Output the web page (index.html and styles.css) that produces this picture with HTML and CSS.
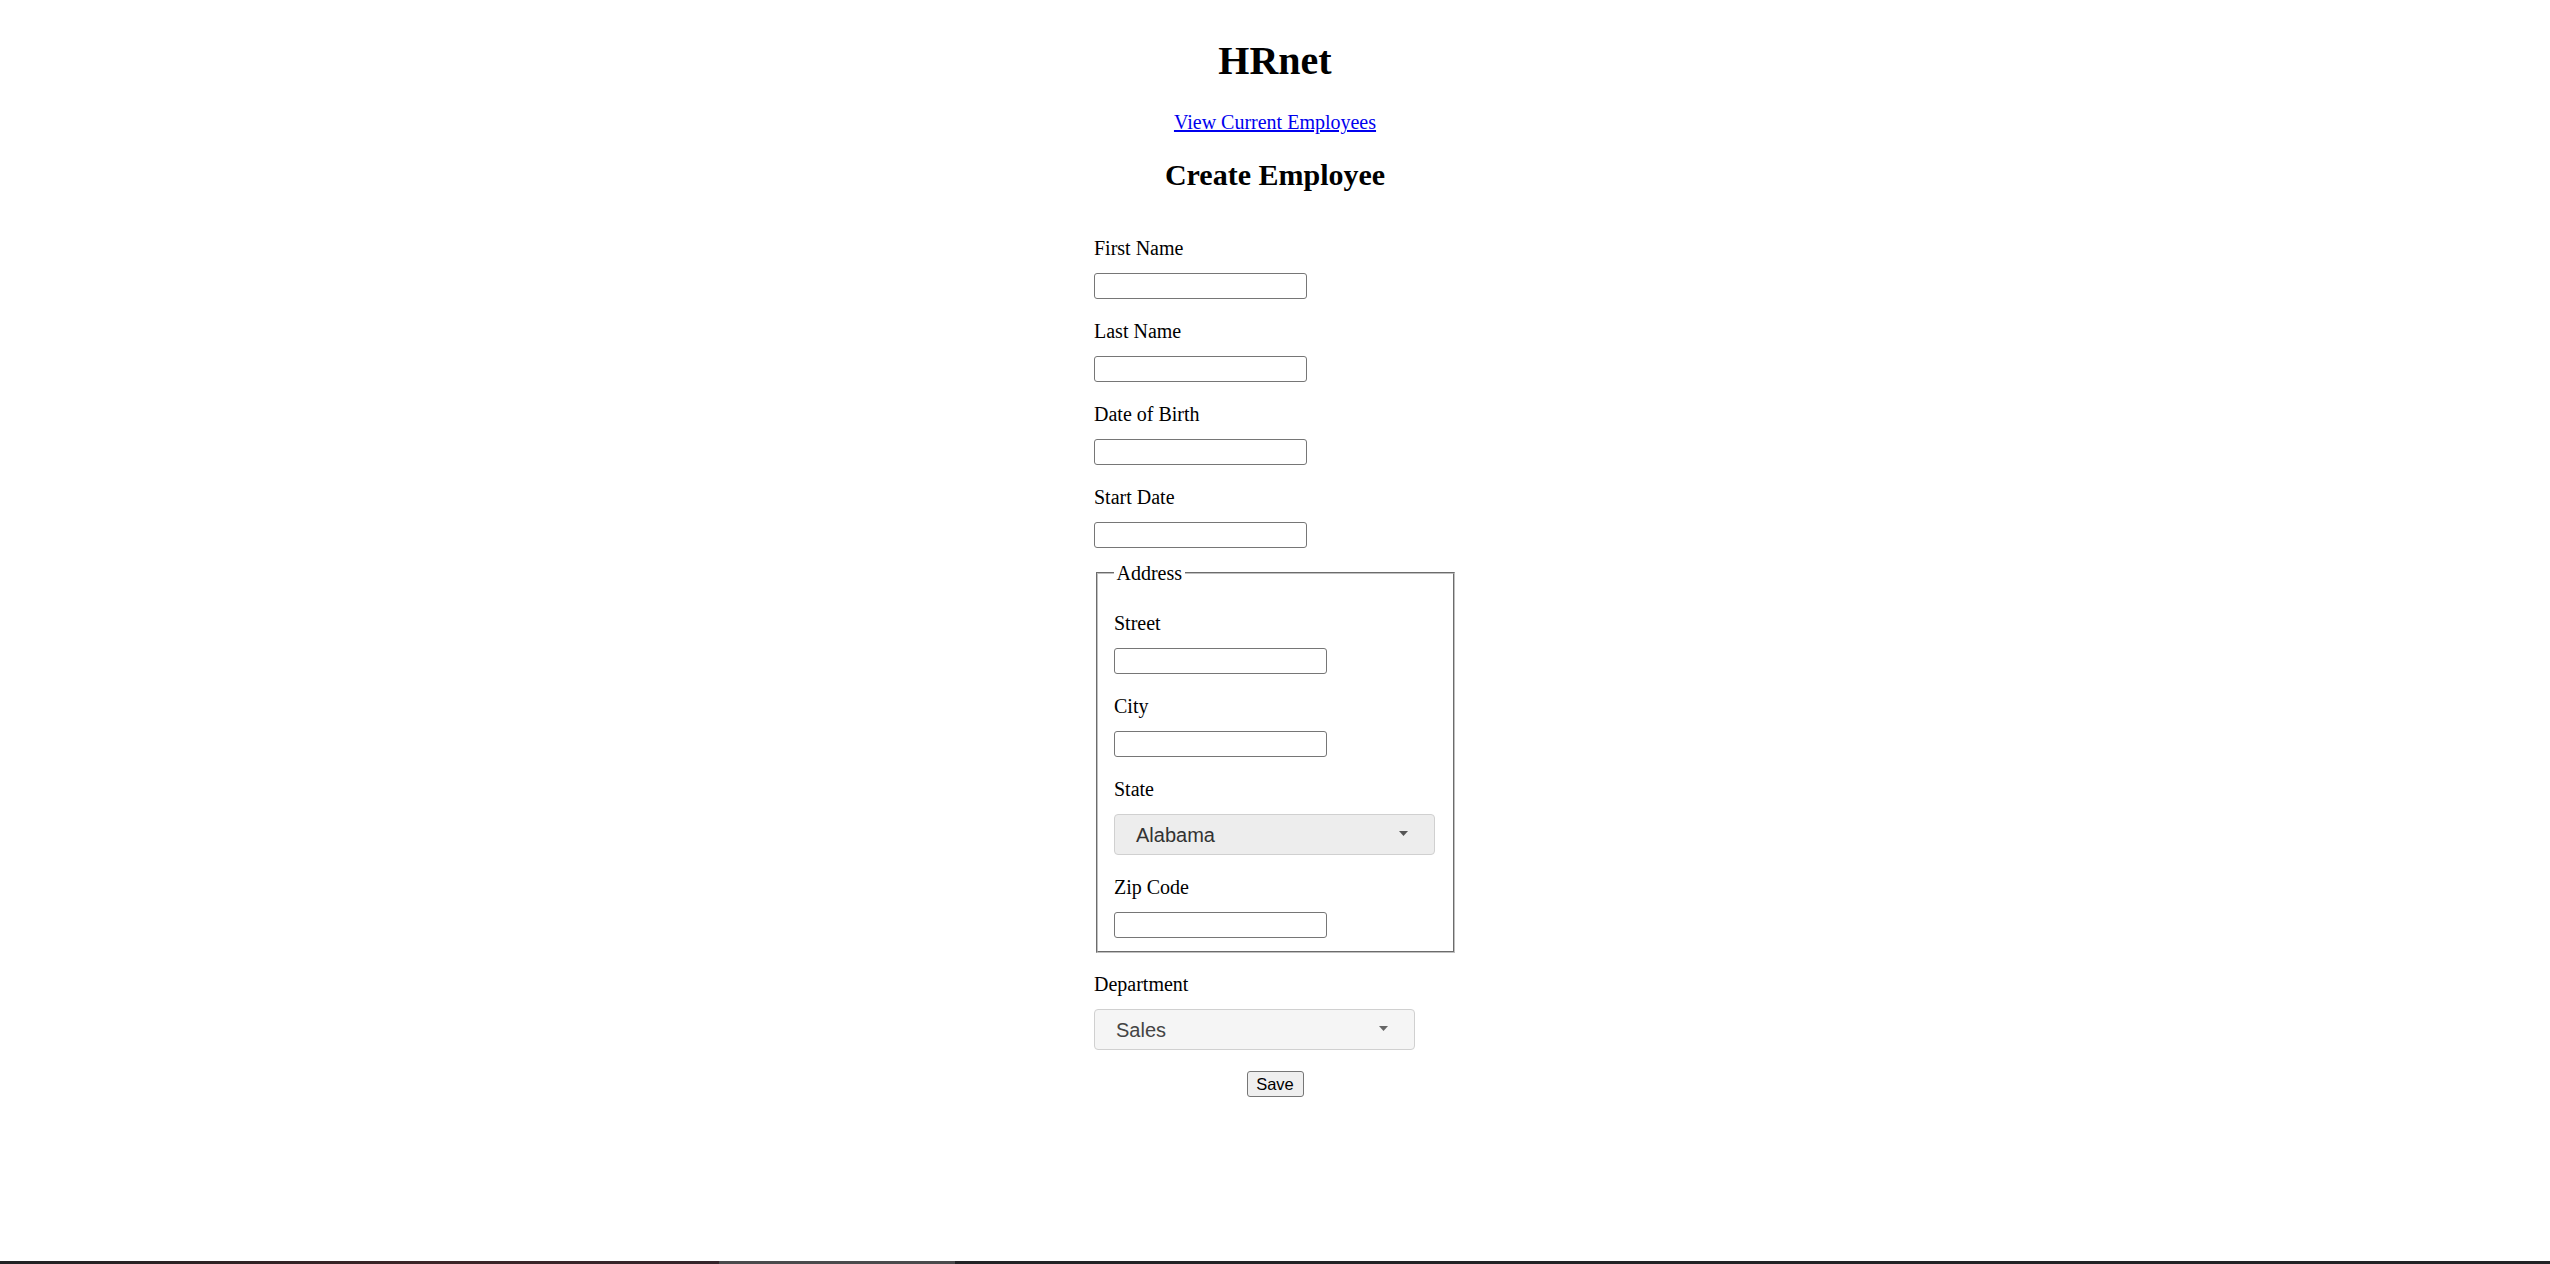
FILE: index.html
```html
<!DOCTYPE html>
<html lang="en">
<head>
<meta charset="utf-8">
<title>HRnet</title>
<link rel="stylesheet" href="styles.css">
</head>
<body>
<div class="page">
  <main class="container">
    <h1 class="title">HRnet</h1>
    <a class="nav-link" href="#">View Current Employees</a>
    <h2 class="subtitle">Create Employee</h2>
    <form class="form">
      <label class="label" for="first-name">First Name</label>
      <input class="input" id="first-name" type="text">
      <label class="label" for="last-name">Last Name</label>
      <input class="input" id="last-name" type="text">
      <label class="label" for="dob">Date of Birth</label>
      <input class="input" id="dob" type="text">
      <label class="label" for="start">Start Date</label>
      <input class="input" id="start" type="text">

      <fieldset class="address">
        <legend class="legend">Address</legend>
        <label class="label" for="street">Street</label>
        <input class="input" id="street" type="text">
        <label class="label" for="city">City</label>
        <input class="input" id="city" type="text">
        <label class="label">State</label>
        <div class="dropdown dropdown-state">
          <span class="dropdown-value">Alabama</span>
          <svg class="caret" width="9" height="5" viewBox="0 0 9 5"><path d="M0 0 H9 L4.5 5 Z" fill="#555"/></svg>
        </div>
        <label class="label" for="zip">Zip Code</label>
        <input class="input" id="zip" type="text">
      </fieldset>

      <label class="label label-dept">Department</label>
      <div class="dropdown dropdown-dept">
        <span class="dropdown-value">Sales</span>
        <svg class="caret" width="9" height="5" viewBox="0 0 9 5"><path d="M0 0 H9 L4.5 5 Z" fill="#666"/></svg>
      </div>
      <button class="save" type="button">Save</button>
    </form>
  </main>
  <div class="taskbar-edge">
    <div class="edge-dark"></div>
    <div class="edge-gray"></div>
    <div class="edge-end"></div>
  </div>
</div>
</body>
</html>
```
FILE: styles.css
```css
html, body {
  margin: 0;
  padding: 0;
  background: #ffffff;
}

body {
  font-family: "Liberation Serif", "Times New Roman", serif;
  font-size: 20px;
  color: #000;
}

.page {
  min-height: 100vh;
  display: flex;
  flex-direction: column;
}

.container {
  display: flex;
  flex-direction: column;
  align-items: center;
  padding-top: 11px;
}

.title {
  font-size: 40px;
  font-weight: bold;
  line-height: 46px;
  margin: 27px 0 27px;
}

.nav-link {
  display: block;
  font-size: 20px;
  line-height: 23px;
  color: #0000ee;
  text-decoration: underline;
}

.subtitle {
  font-size: 30px;
  font-weight: bold;
  line-height: 35px;
  margin: 23px 0 24px;
}

.form {
  width: 362px;
  display: flex;
  flex-direction: column;
  align-items: flex-start;
}

.label {
  display: block;
  line-height: 23px;
  margin: 21px 0 13px;
}

.label-dept {
  margin-top: 20px;
}

.input {
  display: block;
  box-sizing: border-box;
  width: 213px;
  height: 26px;
  margin: 0;
  padding: 1px 3px;
  border: 1px solid #767676;
  border-radius: 3px;
  background: #fff;
  font-family: "Liberation Sans", Arial, sans-serif;
  font-size: 16px;
}

.address {
  align-self: stretch;
  display: block;
  margin: 13px 1px 0 2px;
  padding: 7px 16px 13px;
  border: 2px groove rgb(192, 192, 192);
  min-width: 0;
}

.legend {
  padding: 0 2.5px;
  line-height: 23px;
  position: relative;
  top: 1px;
}

.dropdown {
  box-sizing: border-box;
  width: 321px;
  height: 41px;
  display: flex;
  align-items: center;
  justify-content: space-between;
  padding: 0 26px 0 21px;
  border: 1px solid #d0d0d0;
  border-radius: 4px;
  font-family: "Liberation Sans", Arial, sans-serif;
  font-size: 20px;
}

.dropdown-state {
  background: #ededed;
  color: #333;
}

.dropdown-dept {
  background: #f5f5f5;
  color: #444;
}

.dropdown-value {
  line-height: 23px;
  margin-top: 1px;
}

.caret {
  display: block;
  margin-top: -3px;
}

.save {
  align-self: center;
  margin-top: 21px;
  box-sizing: border-box;
  height: 26px;
  width: 57px;
  padding: 0;
  border: 1px solid #767676;
  border-radius: 3px;
  background: #efefef;
  color: #000;
  font-family: "Liberation Sans", Arial, sans-serif;
  font-size: 16.5px;
}

.taskbar-edge {
  margin-top: auto;
  height: 3px;
  display: flex;
}

.edge-dark {
  width: 719px;
  background: linear-gradient(90deg, #202224 0%, #2e2224 30%, #3c2427 60%, #34242a 100%);
}

.edge-gray {
  width: 236px;
  background: #4a4a4c;
}

.edge-end {
  flex: 1;
  background: #222325;
}
```
